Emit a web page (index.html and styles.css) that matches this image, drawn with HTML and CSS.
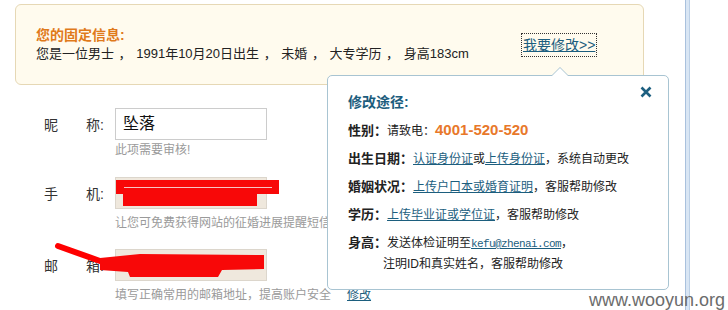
FILE: index.html
```html
<!DOCTYPE html>
<html lang="zh-CN">
<head>
  <meta charset="UTF-8">
  <title>修改资料</title>
  <link rel="stylesheet" href="styles.css">
</head>
<body>
  <div class="layout">
    <div class="main">
      <div class="fixed-info">
        <div class="fixed-text">
          <h3>您的固定信息:</h3>
          <p>您是一位男士 ， 1991年10月20日出生 ， 未婚 ， 大专学历 ， 身高183cm</p>
        </div>
        <a class="edit-link" href="#">我要修改&gt;&gt;</a>
      </div>

      <div class="profile">
        <div class="group group-nick">
          <div class="form-row">
            <label class="label"><span>昵</span><span>称:</span></label>
            <div class="field">坠落</div>
          </div>
          <div class="hint">此项需要审核!</div>
        </div>

        <div class="group group-phone">
          <div class="form-row">
            <label class="label"><span>手</span><span>机:</span></label>
            <div class="field field-locked"></div>
          </div>
          <div class="hint">让您可免费获得网站的征婚进展提醒短信</div>
        </div>

        <div class="group group-mail">
          <div class="form-row">
            <label class="label"><span>邮</span><span>箱:</span></label>
            <div class="field field-locked"></div>
          </div>
          <div class="hint">填写正确常用的邮箱地址，提高账户安全<a href="#" class="hint-link">修改</a></div>
        </div>
      </div>
    </div>
    <div class="rail"></div>

    <!-- redaction marks -->
    <svg class="scribble" width="300" height="310" viewBox="0 0 300 310">
      <rect x="116" y="180" width="163" height="14" fill="#f80808"/>
      <rect x="123" y="193" width="134" height="13" fill="#f80808"/>
      <line x1="124" y1="187.5" x2="272" y2="187.5" stroke="#f7c4c4" stroke-width="1"/>
      <path d="M58 246 L100 261" stroke="#f00" stroke-width="6" stroke-linecap="round"/>
      <path d="M100 258 L140 254 L264 255 L264 269 L222 270 L218 277 L130 277 L128 272 L100 270 Z" fill="#f80808"/>
    </svg>

    <div class="popup">
      <svg class="close" width="12" height="12" viewBox="0 0 12 12">
        <path d="M1.5 1.5 L10.5 10.5 M10.5 1.5 L1.5 10.5" stroke="#1d5f80" stroke-width="2.6"/>
      </svg>
      <h4>修改途径:</h4>
      <div class="way"><b>性别：</b>请致电：<span class="tel">4001-520-520</span></div>
      <div class="way"><b>出生日期：</b><a href="#">认证身份证</a>或<a href="#">上传身份证</a>，系统自动更改</div>
      <div class="way"><b>婚姻状况：</b><a href="#">上传户口本或婚育证明</a>，客服帮助修改</div>
      <div class="way"><b>学历：</b><a href="#">上传毕业证或学位证</a>，客服帮助修改</div>
      <div class="way"><b>身高：</b>发送体检证明至<a href="#" class="mail">kefu@zhenai.com</a>，<br><span class="indent">注明ID和真实姓名，客服帮助修改</span></div>
    </div>

    <div class="watermark">www.wooyun.org</div>
  </div>
</body>
</html>
```

FILE: styles.css
```css
body {
  margin: 0;
  background: #ffffff;
  font-family: "Liberation Sans", "Noto Sans CJK SC", sans-serif;
  color: #222222;
}

.layout {
  position: relative;
  display: flex;
  height: 310px;
  overflow: hidden;
}

.main {
  margin-left: 15px;
  width: 629px;
  padding-top: 4px;
}

/* fixed info box */
.fixed-info {
  box-sizing: border-box;
  height: 81px;
  border: 1px solid #e6d8b5;
  border-radius: 6px;
  background: #fffbee;
  padding: 21px 0 0 20px;
  display: flex;
  align-items: flex-start;
}

.fixed-text {
  width: 486px;
}

.fixed-text h3 {
  margin: 0;
  font-size: 14px;
  line-height: 18px;
  color: #e07a1b;
}

.fixed-text p {
  margin: 1px 0 0;
  font-size: 13px;
  line-height: 18px;
  color: #222222;
  word-spacing: 1px;
}

.edit-link {
  margin-top: 8px;
  font-size: 14px;
  line-height: 18px;
  padding: 2px 1px;
  color: #1c5e7e;
  outline: 1px dotted #333333;
}

/* form */
.profile {
  margin-top: 23px;
}

.form-row {
  display: flex;
  align-items: center;
  padding-left: 29px;
}

.label {
  width: 60px;
  display: flex;
  justify-content: space-between;
  font-size: 14px;
  color: #333333;
}

.field {
  box-sizing: border-box;
  margin-left: 11px;
  width: 152px;
  height: 32px;
  border: 1px solid #cccccc;
  padding-left: 7px;
  font-size: 16px;
  line-height: 30px;
  color: #111111;
}

.field-locked {
  background: #efe8dd;
  border-color: #dcd6cc;
}

.hint {
  margin-left: 100px;
  font-size: 12px;
  line-height: 16px;
  color: #9a9a9a;
  white-space: nowrap;
}

.group-nick .hint {
  margin-top: 2px;
}

.group-phone {
  margin-top: 19px;
}

.group-phone .hint,
.group-mail .hint {
  margin-top: 6px;
}

.group-mail {
  margin-top: 18px;
}

.hint-link {
  margin-left: 16px;
  color: #1c5e7e;
}

.rail {
  margin-left: 41px;
  width: 3px;
  background: #d9e6f4;
  border-left: 1px solid #a9c1dd;
  border-right: 1px solid #bcd0e6;
}

.scribble {
  position: absolute;
  left: 0;
  top: 0;
}

/* popup */
.popup {
  position: absolute;
  left: 327px;
  top: 75px;
  box-sizing: border-box;
  width: 342px;
  height: 215px;
  background: #ffffff;
  border: 1px solid #a8c4d2;
  border-radius: 5px;
  padding: 16px 0 0 20px;
  font-size: 12px;
  color: #222222;
}

.popup::before,
.popup::after {
  content: "";
  position: absolute;
  left: 223px;
  border: 9px solid transparent;
  border-top: 0;
}

.popup::before {
  top: -9px;
  border-bottom: 9px solid #a8c4d2;
}

.popup::after {
  top: -8px;
  border-bottom: 9px solid #ffffff;
}

.close {
  position: absolute;
  top: 10px;
  right: 16px;
}

.popup h4 {
  margin: 0;
  font-size: 14px;
  line-height: 20px;
  color: #1c5d7d;
}

.way {
  margin-top: 8px;
  line-height: 20px;
}

.way b {
  font-size: 13px;
}

.way a {
  color: #1c5e7e;
}

.tel {
  font-family: "Liberation Sans", sans-serif;
  font-weight: bold;
  font-size: 15px;
  color: #e8782a;
}

.mail {
  font-family: "Liberation Mono", monospace;
  font-size: 11px;
  letter-spacing: -0.6px;
}

.indent {
  padding-left: 35px;
}

.watermark {
  position: absolute;
  left: 589px;
  top: 290px;
  font-family: "Liberation Sans", sans-serif;
  font-size: 18px;
  line-height: 20px;
  color: #6c6c6c;
}
```
